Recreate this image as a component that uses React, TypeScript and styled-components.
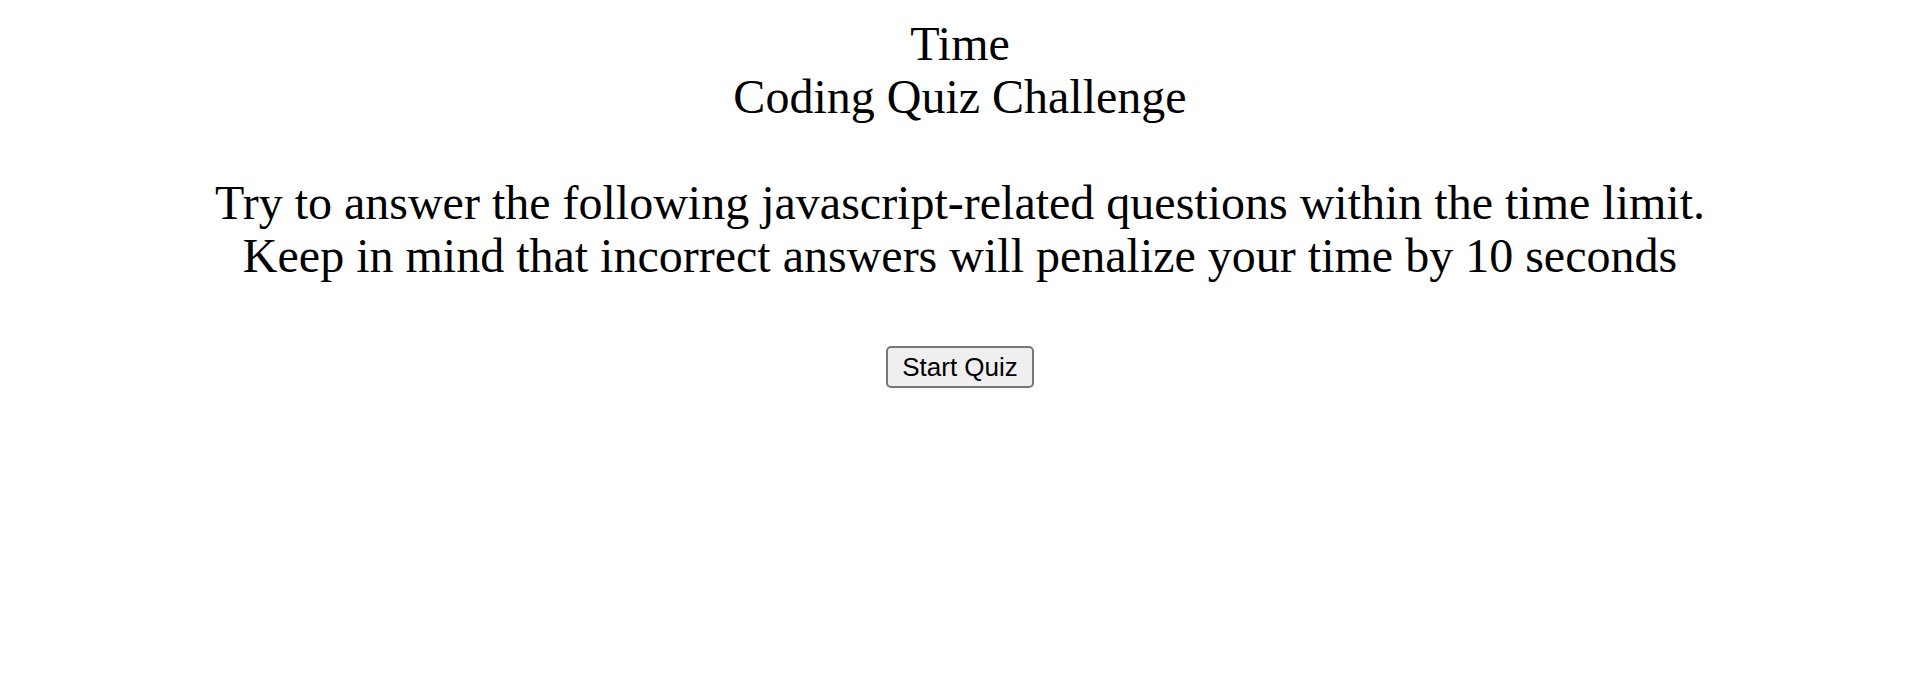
import React from "react";
import styled, { createGlobalStyle } from "styled-components";

const Global = createGlobalStyle`
  html, body { margin: 0; padding: 0; background: #fff; }
  body { font-family: "Liberation Serif", "Times New Roman", serif; color: #000; }
`;

const Page = styled.main`
  display: flex;
  flex-direction: column;
  align-items: center;
  padding-top: 17px;
  text-align: center;
`;

const Title = styled.div`
  font-size: 48px;
  line-height: 53px;
`;

const Intro = styled.p`
  font-size: 48px;
  line-height: 53.4px;
  margin: 53px 0 0;
`;

const StartButton = styled.button`
  margin-top: 63px;
  font-family: "Liberation Sans", Arial, sans-serif;
  font-size: 26px;
  line-height: 30px;
  padding: 4px 14px;
  color: #000;
  background: #efefef;
  border: 2px solid #767676;
  border-radius: 5px;
  cursor: pointer;
`;

export default function App() {
  return (
    <>
      <Global />
      <Page>
        <Title>Time</Title>
        <Title>Coding Quiz Challenge</Title>
        <Intro>
          Try to answer the following javascript-related questions within the time limit.
          <br />
          Keep in mind that incorrect answers will penalize your time by 10 seconds
        </Intro>
        <StartButton>Start Quiz</StartButton>
      </Page>
    </>
  );
}
